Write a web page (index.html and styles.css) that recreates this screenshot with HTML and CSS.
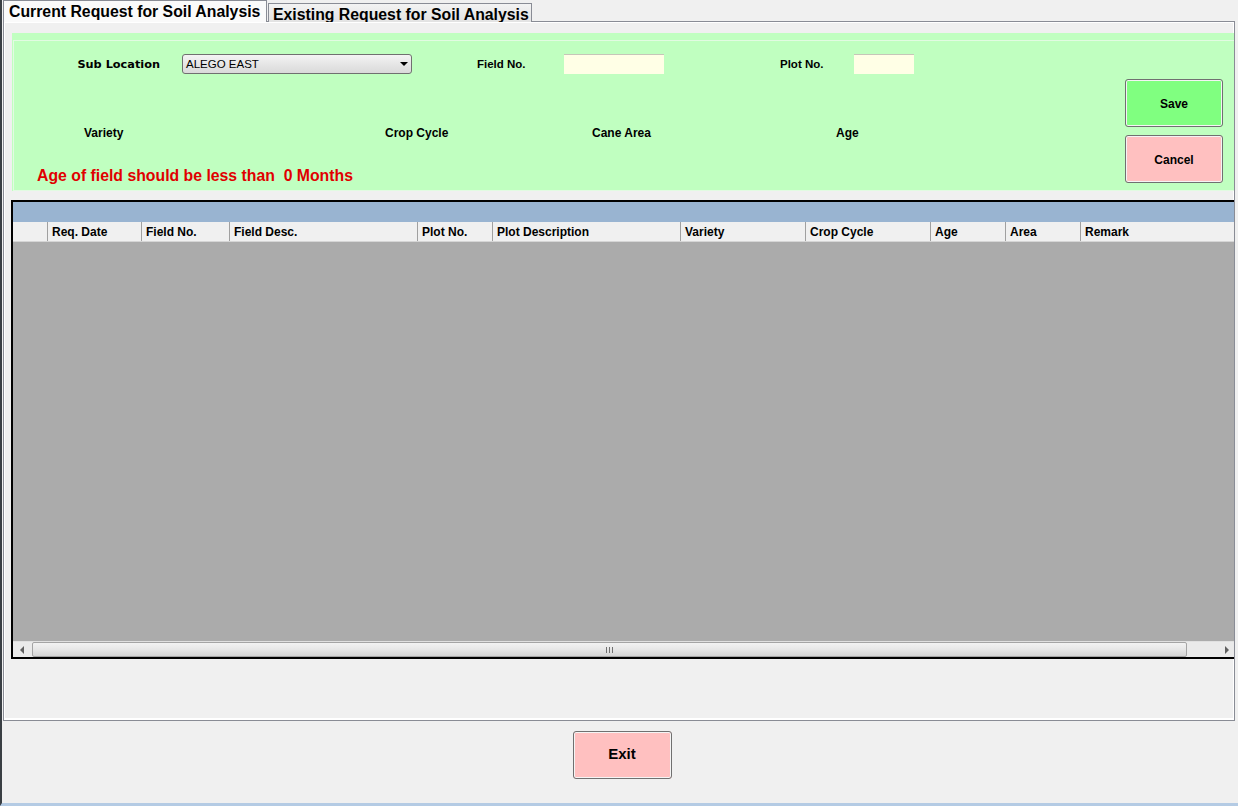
FILE: index.html
```html
<!DOCTYPE html>
<html>
<head>
<meta charset="utf-8">
<link rel="stylesheet" href="styles.css">
</head>
<body>
<div class="window">
  <div class="tabs">
    <div class="tab active">Current Request for Soil Analysis</div>
    <div class="tab other"><span>Existing Request for Soil Analysis</span></div>
  </div>
  <div class="tabpage">
    <div class="green">
      <div class="green-inner">
        <div class="form">
          <div class="row1">
            <div class="cell sub-label">Sub Location</div>
            <div class="combo"><span class="combo-text">ALEGO EAST</span><span class="combo-arrow"></span></div>
            <div class="cell lbl field-lbl">Field No.</div>
            <div class="textbox field-box"></div>
            <div class="cell lbl plot-lbl">Plot No.</div>
            <div class="textbox plot-box"></div>
          </div>
          <div class="row2">
            <div class="cell lbl2 c-variety">Variety</div>
            <div class="cell lbl2 c-crop">Crop Cycle</div>
            <div class="cell lbl2 c-cane">Cane Area</div>
            <div class="cell lbl2 c-age">Age</div>
          </div>
          <div class="msg">Age of field should be less than&nbsp; 0 Months</div>
        </div>
        <div class="btns">
          <div class="btn save">Save</div>
          <div class="btn cancel">Cancel</div>
        </div>
      </div>
    </div>
    <div class="grid">
      <div class="caption"></div>
      <div class="hdr">
        <div class="hc w-rh"></div>
        <div class="hc w-date">Req. Date</div>
        <div class="hc w-fno">Field No.</div>
        <div class="hc w-fdesc">Field Desc.</div>
        <div class="hc w-pno">Plot No.</div>
        <div class="hc w-pdesc">Plot Description</div>
        <div class="hc w-var">Variety</div>
        <div class="hc w-crop">Crop Cycle</div>
        <div class="hc w-age">Age</div>
        <div class="hc w-area">Area</div>
        <div class="hc w-rem">Remark</div>
      </div>
      <div class="gbody"></div>
      <div class="hscroll">
        <div class="arrow-btn"><span class="tri-left"></span></div>
        <div class="track">
          <div class="thumb"><span class="grip"></span></div>
        </div>
        <div class="arrow-btn right"><span class="tri-right"></span></div>
      </div>
    </div>
  </div>
  <div class="footer">
    <div class="btn exit">Exit</div>
  </div>
</div>
</body>
</html>
```

FILE: styles.css
```css
* { box-sizing: border-box; }
html, body { margin: 0; padding: 0; }
body {
  width: 1238px;
  height: 806px;
  overflow: hidden;
  font-family: "Liberation Sans", Arial, sans-serif;
  background: #f0f0f0;
}
.window {
  width: 1238px;
  height: 806px;
  background: #f0f0f0;
  border-left: 2px solid #3a3f44;
  border-bottom: 3px solid #b4cbe4;
  overflow: hidden;
}
.tabs {
  height: 22px;
  display: flex;
  align-items: flex-end;
  padding-left: 1px;
}
.tab {
  font-weight: bold;
  color: #000;
  white-space: nowrap;
}
.tab.active {
  position: relative;
  z-index: 1;
  width: 264px;
  height: 22px;
  background: #fafafa;
  border: 1px solid #898c95;
  border-bottom: none;
  padding-left: 5px;
  line-height: 21px;
  font-size: 15.8px;
}
.tab.other {
  width: 264px;
  height: 19px;
  margin-left: 1px;
  border: 1px solid #898c95;
  border-bottom: none;
  background: linear-gradient(#f3f3f3, #e2e2e2);
  padding-left: 4px;
  overflow: hidden;
  line-height: 22px;
  font-size: 15.8px;
}
.tabpage {
  margin-top: -1px;
  margin-left: 1px;
  width: 1232px;
  height: 700px;
  border: 1px solid #898c95;
  box-shadow: inset 1px 1px 0 #fff, inset -1px -2px 0 #fff;
  background: #f0f0f0;
  overflow: hidden;
  padding: 11px 0 0 7px;
}
.green {
  margin-left: 1px;
  width: 1222px;
  height: 158px;
  background: #c0ffc0;
  padding: 7px 0 0 1px;
}
.green-inner {
  height: 151px;
  border: 1px solid #e2fbe2;
  border-right: none;
  display: flex;
}
.form {
  flex: 1;
  padding-top: 13px;
}
.row1 {
  display: flex;
  align-items: center;
  height: 20px;
}
.cell {
  font-weight: bold;
  color: #000;
  white-space: nowrap;
}
.sub-label {
  width: 168px;
  text-align: right;
  padding-right: 22px;
  font-family: "DejaVu Sans", Verdana, sans-serif;
  font-size: 11.3px;
}
.lbl { font-size: 11.5px; }
.lbl2 { font-size: 12px; }
.combo {
  width: 230px;
  height: 20px;
  border: 1px solid #707070;
  border-radius: 3px;
  background: linear-gradient(#f4f4f4, #e6e6e6 50%, #dadada);
  display: flex;
  align-items: center;
  padding-left: 3px;
  font-size: 11.5px;
}
.combo-text { flex: 1; }
.combo-arrow {
  width: 0; height: 0;
  border-left: 4px solid transparent;
  border-right: 4px solid transparent;
  border-top: 4px solid #000;
  margin-right: 3px;
}
.field-lbl { margin-left: 65px; width: 87px; }
.textbox {
  height: 20px;
  background: #ffffe6;
  border-top: 1px solid #c6c6b8;
}
.field-box { width: 100px; }
.plot-lbl { margin-left: 116px; width: 74px; }
.plot-box { width: 60px; }
.row2 {
  display: flex;
  height: 16px;
  line-height: 16px;
  margin-top: 51px;
  padding-left: 70px;
}
.c-variety { width: 301px; }
.c-crop { width: 207px; }
.c-cane { width: 244px; }
.msg {
  margin-top: 26px;
  height: 18px;
  line-height: 18px;
  padding-left: 23px;
  font-size: 15.8px;
  font-weight: bold;
  color: #e00000;
}
.btns {
  display: flex;
  flex-direction: column;
  gap: 8px;
  padding-top: 38px;
  padding-right: 11px;
}
.btn {
  display: flex;
  align-items: center;
  justify-content: center;
  font-weight: bold;
  color: #000;
  border: 1px solid #707070;
  border-radius: 3px;
  box-shadow: inset 0 0 0 1px #f4f4f4;
}
.save, .cancel {
  width: 98px;
  height: 48px;
  font-size: 12px;
  padding-top: 1px;
}
.save { background: #80ff80; }
.cancel { background: #ffc0c0; }
.grid {
  margin-top: 9px;
  width: 1226px;
  height: 459px;
  border: 2px solid #000;
  display: flex;
  flex-direction: column;
}
.caption {
  height: 20px;
  background: #99b4d1;
}
.hdr {
  height: 20px;
  display: flex;
  background: #f0f0f0;
  border-bottom: 1px solid #d5d5d5;
}
.hc {
  height: 100%;
  border-right: 1px solid #a0a0a0;
  padding-left: 4px;
  font-size: 12px;
  font-weight: bold;
  line-height: 21px;
  white-space: nowrap;
}
.w-rh { width: 35px; }
.w-date { width: 94px; }
.w-fno { width: 88px; }
.w-fdesc { width: 188px; }
.w-pno { width: 75px; }
.w-pdesc { width: 188px; }
.w-var { width: 125px; }
.w-crop { width: 125px; }
.w-age { width: 75px; }
.w-area { width: 75px; }
.w-rem { flex: 1; border-right: none; }
.gbody {
  height: 399px;
  background: #ababab;
}
.hscroll {
  height: 16px;
  display: flex;
  background: #eaeaea;
  border-top: 1px solid #e0e0e0;
}
.arrow-btn {
  width: 17px;
  display: flex;
  align-items: center;
  justify-content: center;
}
.arrow-btn.right { width: 16px; }
.tri-left {
  width: 0; height: 0;
  border-top: 4px solid transparent;
  border-bottom: 4px solid transparent;
  border-right: 4px solid #606060;
}
.tri-right {
  width: 0; height: 0;
  border-top: 4px solid transparent;
  border-bottom: 4px solid transparent;
  border-left: 4px solid #606060;
}
.track {
  flex: 1;
  padding: 0 1px 0 2px;
  display: flex;
}
.thumb {
  width: 1155px;
  height: 15px;
  border: 1px solid #a4a4a4;
  border-radius: 2px;
  background: linear-gradient(#f2f2f2, #e6e6e6 50%, #d4d4d4);
  display: flex;
  align-items: center;
  justify-content: center;
}
.grip {
  width: 7px;
  height: 6px;
  background: repeating-linear-gradient(90deg, #707070 0 1px, transparent 1px 3px);
}
.footer {
  display: flex;
  justify-content: center;
  padding-top: 10px;
  padding-left: 4px;
}
.exit {
  width: 99px;
  height: 48px;
  background: #ffc0c0;
  font-size: 15px;
  padding-bottom: 3px;
}
```
